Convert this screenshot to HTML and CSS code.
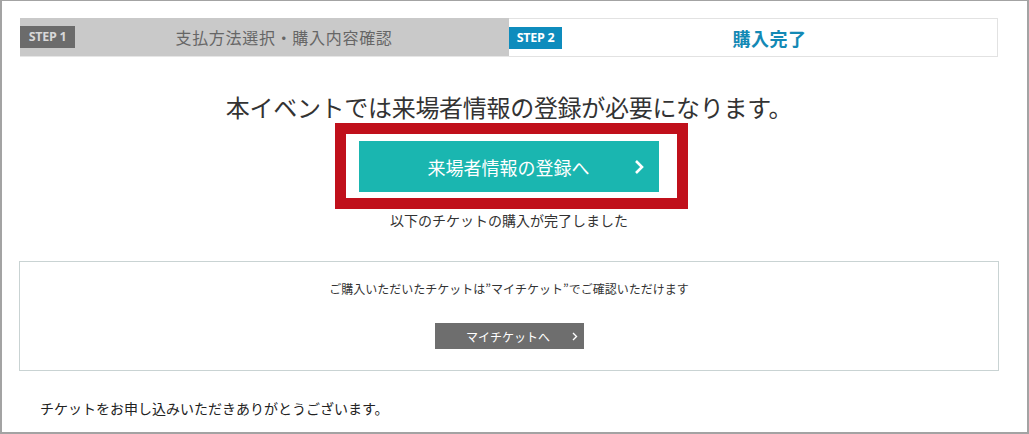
FILE: index.html
```html
<!DOCTYPE html>
<html lang="ja">
<head>
<meta charset="utf-8">
<link rel="stylesheet" href="styles.css">
</head>
<body>
<div class="frame">
  <div class="content">
    <div class="steps">
      <div class="step step-done">
        <span class="badge badge-gray">STEP 1</span>
        <span class="step-label">支払方法選択・購入内容確認</span>
      </div>
      <div class="step step-current">
        <span class="badge badge-blue">STEP 2</span>
        <span class="step-label step-label-current">購入完了</span>
      </div>
    </div>

    <p class="notice">本イベントでは来場者情報の登録が必要になります。</p>

    <div class="highlight">
      <a class="btn-primary" href="#">
        <span class="btn-text">来場者情報の登録へ</span>
        <svg class="chev" width="10" height="16" viewBox="0 0 10 16"><path d="M2 2 L8 8 L2 14" fill="none" stroke="#fff" stroke-width="2.6"/></svg>
      </a>
    </div>

    <p class="complete">以下のチケットの購入が完了しました</p>

    <div class="info-box">
      <p class="info-text">ご購入いただいたチケットは”マイチケット”でご確認いただけます</p>
      <a class="btn-secondary" href="#">
        <span class="btn2-text">マイチケットへ</span>
        <svg class="chev2" width="6" height="9" viewBox="0 0 6 9"><path d="M1 1 L4.5 4.5 L1 8" fill="none" stroke="#fff" stroke-width="1.4"/></svg>
      </a>
    </div>

    <p class="thanks">チケットをお申し込みいただきありがとうございます。</p>
  </div>
</div>
</body>
</html>
```

FILE: styles.css
```css
* { box-sizing: border-box; }
html, body { margin: 0; padding: 0; background: #fff; }
body {
  font-family: "Noto Sans CJK JP", "Noto Sans", sans-serif;
  color: #333;
}
.frame {
  width: 1029px;
  height: 434px;
  border: 2px solid #a3a3a3;
  border-top-width: 1px;
  overflow: hidden;
}
.content {
  width: 980px;
  margin-left: 17px;
  padding-top: 17px;
}
.steps {
  display: flex;
  margin: 0 1px;
  height: 39px;
}
.step {
  display: flex;
  align-items: center;
}
.step-done {
  width: 489px;
  background: #c9c9c9;
  border-bottom: 1px solid #e6e6e6;
}
.step-current {
  flex: 1;
  border: 1px solid #e2e2e2;
  border-left: none;
}
.badge {
  font-family: "Open Sans", "DejaVu Sans", sans-serif;
  font-weight: 700;
  font-size: 12.5px;
  height: 22px;
  line-height: 22px;
  letter-spacing: -0.3px;
  text-align: center;
}
.badge-gray {
  width: 55px;
  background: #6b6b6b;
  color: #d8d8d8;
}
.badge-blue {
  width: 53px;
  background: #0e8cbd;
  color: #fff;
}
.step-label {
  flex: 1;
  text-align: center;
  font-size: 16px;
  letter-spacing: 0.7px;
  color: #666;
  padding-right: 16px;
}
.step-label-current {
  font-size: 18px;
  font-weight: 700;
  color: #1389b5;
  letter-spacing: 0.5px;
  padding-right: 20px;
}
.notice {
  margin: 34px 0 0;
  text-align: center;
  font-size: 24px;
  line-height: 32px;
  letter-spacing: -0.3px;
  color: #333;
}
.highlight {
  width: 353px;
  margin: 0 0 0 316px;
  border: 11px solid #c0101b;
  padding: 7px 18px 6px 13px;
}
.btn-primary {
  display: flex;
  align-items: center;
  height: 51px;
  background: #1ab6b0;
  color: #fff;
  text-decoration: none;
  padding: 0 15px 0 0;
}
.btn-text {
  flex: 1;
  text-align: center;
  font-size: 18px;
  padding-left: 24px;
}
.complete {
  margin: 1px 0 0;
  text-align: center;
  font-size: 14px;
  line-height: 20px;
  color: #333;
}
.info-box {
  margin-top: 31px;
  height: 110px;
  border: 1px solid #c9d3d3;
  display: flex;
  flex-direction: column;
  align-items: center;
}
.info-text {
  margin: 19px 0 0;
  font-size: 12px;
  line-height: 16px;
  color: #333;
}
.btn-secondary {
  margin-top: 26px;
  width: 149px;
  height: 26px;
  background: #6e6e6e;
  color: #fff;
  text-decoration: none;
  display: flex;
  align-items: center;
  font-size: 12px;
  padding-right: 6px;
}
.btn2-text {
  flex: 1;
  text-align: center;
  padding-left: 10px;
}
.thanks {
  margin: 27px 0 0 21px;
  font-size: 14px;
  line-height: 20px;
  color: #222;
}
```
